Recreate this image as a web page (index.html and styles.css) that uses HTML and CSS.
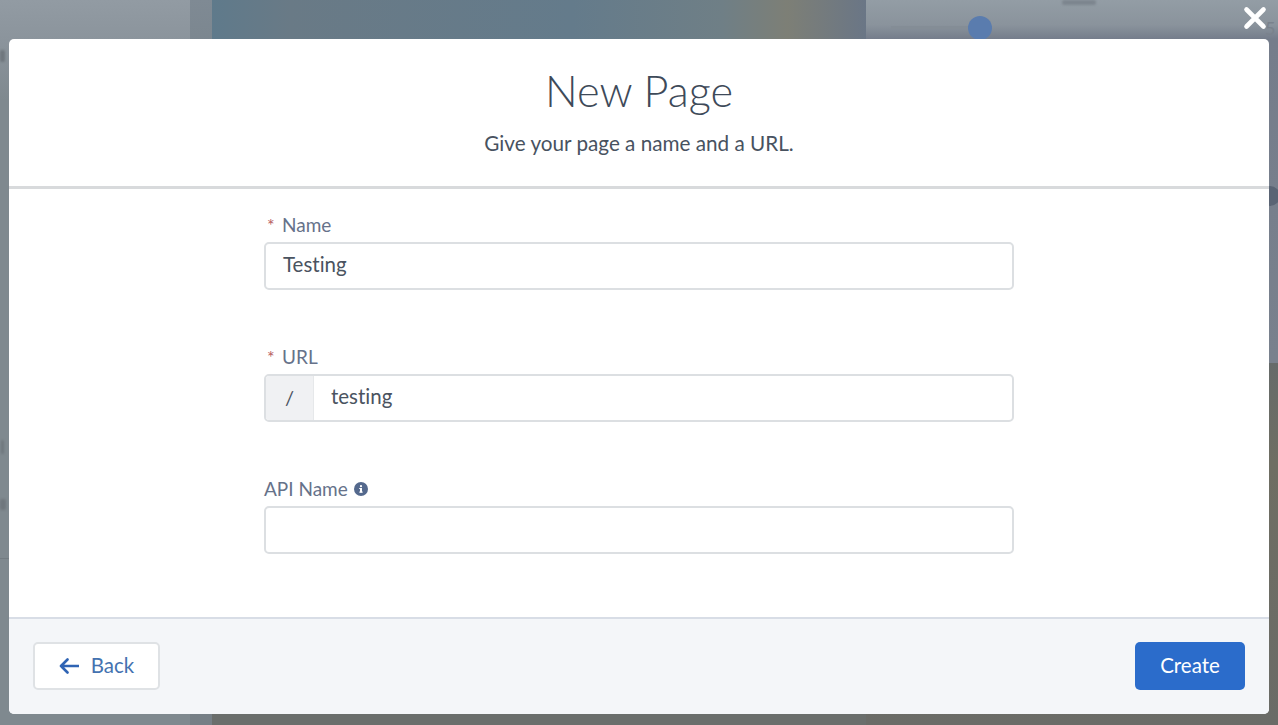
FILE: index.html
```html
<!DOCTYPE html>
<html lang="en">
<head>
<meta charset="utf-8">
<title>New Page</title>
<link rel="stylesheet" href="styles.css">
</head>
<body>
<div class="backdrop">
  <div class="bg-left">
    <div class="smudge smudge-p"></div>
    <div class="smudge smudge-i"></div>
    <div class="smudge smudge-a"></div>
    <div class="ghost-rule"></div>
  </div>
  <div class="bg-gutter"></div>
  <div class="bg-canvas"></div>
  <div class="bg-right">
    <div class="bg-right-top">
      <div class="smudge smudge-top"></div>
      <div class="slider-track"></div>
      <div class="slider-thumb"></div>
      <span class="bg-digit">5</span>
      <div class="bg-knob"></div>
    </div>
    <div class="bg-right-bottom"></div>
  </div>
</div>
<button class="close" aria-label="Close">
  <svg width="24" height="24" viewBox="0 0 24 24"><path d="M3.5 3.5L20.5 20.5M20.5 3.5L3.5 20.5" stroke="#fff" stroke-width="4.6" stroke-linecap="round" fill="none"/></svg>
</button>
<main class="modal">
  <header class="modal-header">
    <h1 class="title">New Page</h1>
    <p class="subtitle">Give your page a name and a URL.</p>
  </header>
  <section class="modal-body">
    <form class="form">
      <div class="field">
        <label class="label"><span class="req">*</span>Name</label>
        <div class="input-box"><span class="input-text">Testing</span></div>
      </div>
      <div class="field">
        <label class="label"><span class="req">*</span>URL</label>
        <div class="input-box"><span class="prefix">/</span><span class="input-text">testing</span></div>
      </div>
      <div class="field">
        <label class="label">API Name
          <svg class="info" width="14" height="14" viewBox="0 0 14 14"><circle cx="7" cy="7" r="7" fill="#54698d"/><rect x="6" y="6" width="2" height="4.6" fill="#fff"/><rect x="5.2" y="9.6" width="3.6" height="1" fill="#fff"/><rect x="5.2" y="6" width="2" height="1" fill="#fff"/><circle cx="7" cy="4.2" r="1.1" fill="#fff"/></svg>
        </label>
        <div class="input-box"></div>
      </div>
    </form>
  </section>
  <footer class="modal-footer">
    <button class="btn btn-back" type="button">
      <svg width="20" height="16" viewBox="0 0 20 16"><path d="M19.5 8H2M8.5 1.5L2 8l6.5 6.5" stroke="#2f64b4" stroke-width="2.6" fill="none" stroke-linecap="round" stroke-linejoin="round"/></svg>
      <span class="btn-label">Back</span>
    </button>
    <button class="btn btn-create" type="button"><span class="btn-label">Create</span></button>
  </footer>
</main>
</body>
</html>
```
FILE: styles.css
```css
* { box-sizing: border-box; }
html, body { margin: 0; height: 100%; }
body {
  width: 1278px;
  height: 725px;
  overflow: hidden;
  position: relative;
  font-family: Lato, "Open Sans", sans-serif;
  font-variant-ligatures: none;
  color: #3e4a59;
}
.backdrop { display: flex; width: 100%; height: 100%; }
.bg-left {
  width: 190px;
  position: relative;
  background: linear-gradient(180deg, #929ba3 0, #8b949c 40px, #7f898f 100px, #7f898f 100%);
}
.smudge {
  position: absolute;
  background: #6f777d;
  filter: blur(1px);
  border-radius: 2px;
}
.smudge-p { left: 0; top: 50px; width: 5px; height: 12px; }
.smudge-i { left: 1px; top: 440px; width: 3px; height: 14px; }
.smudge-a { left: 0; top: 499px; width: 6px; height: 11px; }
.smudge-top { left: 196px; top: 0; width: 34px; height: 5px; background: #7c858e; }
.ghost-rule {
  position: absolute;
  left: 0;
  top: 558px;
  width: 9px;
  height: 1px;
  background: #737c82;
}
.bg-gutter {
  width: 22px;
  background: linear-gradient(180deg, #7f8a94 0, #7a858d 60px, #767f86 100%);
}
.bg-canvas {
  width: 654px;
  background:
    linear-gradient(180deg, rgba(95, 122, 139, 0) 0, rgba(95, 122, 139, 0) 50px, #6a6e6c 690px),
    linear-gradient(90deg, #5f7a8b 0, #697a86 12%, #647b8b 55%, #6f7f86 78%, #7d7f76 88%, #6a7686 100%);
}
.bg-right { flex: 1; display: flex; flex-direction: column; }
.bg-right-top {
  height: 363px;
  position: relative;
  background: linear-gradient(180deg, #939da5 0, #8a939c 25px, #757d8b 39px, #79818d 100%);
}
.bg-right-bottom {
  flex: 1;
  background: linear-gradient(180deg, #666b6a 0, #6f6e63 100px, #6a6b67 100%);
}
.slider-track {
  position: absolute;
  left: 25px;
  top: 26px;
  width: 90px;
  height: 3px;
  background: #848d96;
}
.slider-thumb {
  position: absolute;
  left: 102px;
  top: 16px;
  width: 24px;
  height: 24px;
  border-radius: 50%;
  background: #5a7cae;
}
.bg-digit {
  position: absolute;
  left: 399px;
  top: 17px;
  font-size: 18px;
  line-height: 22px;
  color: #7a828c;
}
.bg-knob {
  position: absolute;
  left: 394px;
  top: 186px;
  width: 20px;
  height: 20px;
  border-radius: 50%;
  background: #5a6474;
}
.close {
  position: absolute;
  left: 1243px;
  top: 6px;
  width: 24px;
  height: 24px;
  padding: 0;
  border: 0;
  background: none;
  display: block;
}
.close svg { display: block; }
.modal {
  position: absolute;
  left: 9px;
  top: 39px;
  width: 1260px;
  height: 675px;
  background: #fff;
  border-radius: 5px;
  display: flex;
  flex-direction: column;
  overflow: hidden;
}
.modal-header {
  height: 150px;
  border-bottom: 3px solid #d8dadc;
  text-align: center;
  padding-top: 21px;
}
.title {
  margin: 0;
  font-size: 43.3px;
  line-height: 60px;
  font-weight: 300;
  color: #3e4a59;
}
.subtitle {
  margin: 9px 0 0;
  font-size: 20.7px;
  line-height: 28px;
  font-weight: 400;
  color: #48525f;
}
.modal-body {
  flex: 1;
  display: flex;
  justify-content: center;
  padding-top: 24px;
}
.form { width: 750px; display: flex; flex-direction: column; gap: 55px; }
.label {
  display: flex;
  align-items: center;
  height: 24px;
  margin-bottom: 5px;
  font-size: 19px;
  line-height: 24px;
  color: #66728a;
}
.req { color: #b8605f; width: 18px; padding-left: 3px; font-size: 18px; }
.info { margin-left: 6px; }
.input-box {
  display: flex;
  align-items: center;
  height: 48px;
  background: #fff;
  border: 2px solid #dcdfe2;
  border-radius: 5px;
  overflow: hidden;
  font-size: 20.5px;
  color: #4a5360;
}
.input-text { padding-left: 17px; padding-bottom: 4px; }
.prefix {
  width: 48px;
  height: 100%;
  background: #f0f1f3;
  border-right: 1px solid #e6e8ea;
  display: flex;
  align-items: center;
  justify-content: center;
  font-size: 20px;
  padding-bottom: 2px;
}
.modal-footer {
  height: 97px;
  border-top: 2px solid #d8dde6;
  background: #f4f6f9;
  display: flex;
  align-items: center;
  justify-content: space-between;
  padding: 0 24px 2px;
}
.btn {
  height: 48px;
  border-radius: 5px;
  font-family: inherit;
  font-size: 20.5px;
  display: flex;
  align-items: center;
  justify-content: center;
  padding: 0;
}
.btn-label { padding-bottom: 2px; }
.btn-back {
  width: 127px;
  gap: 12px;
  background: #fff;
  border: 2px solid #dfe2e5;
  color: #4472b0;
}
.btn-create {
  width: 110px;
  background: #2b6ccb;
  border: 0;
  color: #fff;
}
```
